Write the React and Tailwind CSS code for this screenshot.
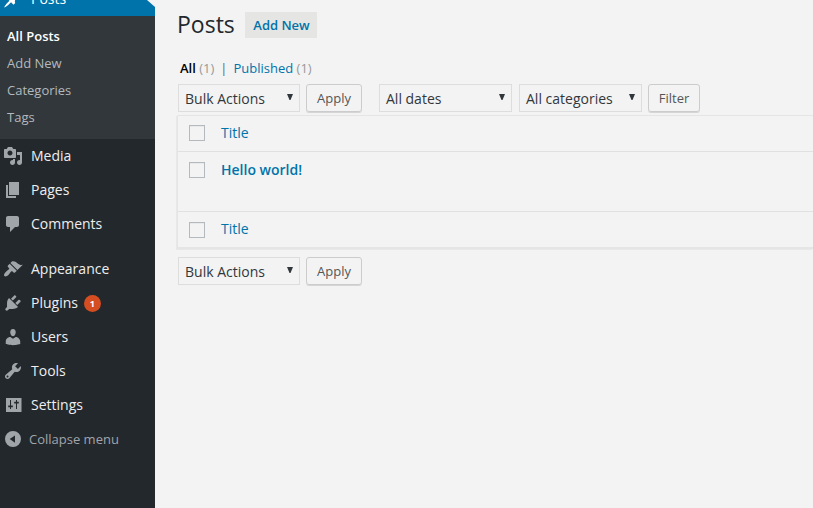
const ICONS = {
  post: "M10.44 3.02l1.82-1.82 6.36 6.35-1.83 1.82c-1.05-.68-2.48-.57-3.41.36l-.75.75c-.92.93-1.04 2.35-.35 3.41l-1.83 1.82-2.41-2.41-2.8 2.79c-.42.42-3.38 2.71-3.8 2.29s1.86-3.39 2.28-3.81l2.79-2.79L4.1 9.36l1.83-1.82c1.05.69 2.48.57 3.4-.36l.75-.75c.93-.92 1.05-2.35.36-3.41z",
  media: "M13 11V4c0-.55-.45-1-1-1h-1.67L9 1H5L3.67 3H2c-.55 0-1 .45-1 1v7c0 .55.45 1 1 1h10c.55 0 1-.45 1-1zM7 4.5c1.38 0 2.5 1.12 2.5 2.5S8.38 9.5 7 9.5 4.5 8.38 4.5 7 5.62 4.5 7 4.5zM14 6h5v10.5c0 1.38-1.12 2.5-2.5 2.5S14 17.88 14 16.5s1.12-2.5 2.5-2.5c.17 0 .34.02.5.05V9h-3V6zm-4 8.05V13h2v3.5c0 1.38-1.12 2.5-2.5 2.5S7 17.88 7 16.5 8.12 14 9.5 14c.17 0 .34.02.5.05z",
  page: "M6 15V2h10v13H6zm-1 1h8v2H3V5h2v11z",
  comments: "M5 2h9c1.1 0 2 .9 2 2v7c0 1.1-.9 2-2 2h-2l-5 5v-5H5c-1.1 0-2-.9-2-2V4c0-1.1.9-2 2-2z",
  appearance: "M14.48 11.06L7.41 3.99l1.5-1.5c.5-.56 2.3-.47 3.51.32 1.21.8 1.43 1.28 2.91 2.1 1.18.64 2.45 1.26 4.45.85zm-.71.71L6.7 4.7 4.93 6.47c-.39.39-.39 1.02 0 1.41l1.06 1.06c.39.39.39 1.03 0 1.42-.6.6-1.43 1.11-2.21 1.69-.35.26-.7.53-1.01.84C1.43 14.23.4 16.08 1.4 17.07c.99 1 2.84-.03 4.18-1.36.31-.31.58-.66.85-1.02.57-.78 1.08-1.61 1.69-2.21.39-.39 1.02-.39 1.41 0l1.06 1.06c.39.39 1.02.39 1.41 0z",
  plugins: "M13.11 4.36L9.87 7.6 8 5.73l3.24-3.24c.35-.34 1.05-.2 1.56.32.52.51.66 1.21.31 1.55zm-8 1.77l.91-1.12 9.01 9.01-1.19.84c-.71.71-2.63 1.16-3.82 1.16H6.14L4.9 17.26c-.59.59-1.54.59-2.12 0-.59-.58-.59-1.53 0-2.12l1.24-1.24v-3.88c0-1.13.4-3.19 1.09-3.89zm7.26 3.97l3.24-3.24c.34-.35 1.04-.21 1.55.31.52.51.66 1.21.31 1.55l-3.24 3.25z",
  users: "M10 9.25c-2.27 0-2.73-3.44-2.73-3.44C7 4.02 7.82 2 9.97 2c2.16 0 2.98 2.02 2.71 3.81 0 0-.41 3.44-2.68 3.44zm0 2.57L12.72 10c2.39 0 4.52 2.33 4.52 4.53v2.49s-3.65 1.13-7.24 1.13c-3.65 0-7.24-1.13-7.24-1.13v-2.49c0-2.25 1.94-4.48 4.47-4.48z",
  tools: "M16.68 9.77c-1.34 1.34-3.3 1.67-4.95.99l-5.41 6.52c-.99.99-2.59.99-3.58 0s-.99-2.59 0-3.57l6.52-5.42c-.68-1.65-.35-3.61.99-4.95 1.28-1.28 3.12-1.62 4.72-1.06l-2.89 2.89 2.82 2.82 2.86-2.87c.53 1.58.18 3.39-1.08 4.65zM3.81 16.21c.4.39 1.04.39 1.43 0 .4-.4.4-1.04 0-1.43-.39-.4-1.03-.4-1.43 0-.39.39-.39 1.03 0 1.43z",
  settings: "M3 3h15.5v14H3zM7 5v5.5H5.2v1.8H7V14h1v-1.7h1.8v-1.8H8V5zM13 5v1.8h-1.8v1.8H13V14h1V8.6h1.8V6.8H14V5z",
  collapse: "M10 2a8 8 0 1 0 0 16 8 8 0 0 0 0-16zM12 6.5v7.2L6.7 10z",
};

function Icon({ name, className = "text-[#a0a5aa]" }) {
  return (
    <svg viewBox="0 0 20 20" className={`size-5 shrink-0 fill-current ${className}`}>
      <path fillRule="evenodd" d={ICONS[name]} />
    </svg>
  );
}

function MenuItem({ icon, label, badge }) {
  return (
    <li className="flex h-[34px] items-center pl-[3px] text-[14px] leading-[18px] text-[#eee]">
      <Icon name={icon} />
      <span className="ml-2">{label}</span>
      {badge && (
        <span className="ml-1.5 mt-px flex size-[17px] items-center justify-center rounded-full bg-[#d54e21] text-[9px] font-bold leading-none text-white">
          {badge}
        </span>
      )}
    </li>
  );
}

function Select({ label, className }) {
  return (
    <div className={`flex h-7 items-center justify-between border border-[#ddd] pl-1.5 pr-1.5 text-[14px] text-[#32373c] ${className}`}>
      <span>{label}</span>
      <svg viewBox="0 0 6 6" className="mb-0.5 size-1.5 fill-[#32373c]">
        <path d="M0 0h6L3.5 6h-1z" />
      </svg>
    </div>
  );
}

function Button({ label, className }) {
  return (
    <button className={`h-7 rounded-[3px] border border-[#ccc] text-center text-[13px] leading-[26px] text-[#555] shadow-[0_1px_0_rgba(0,0,0,0.12)] ${className}`}>
      {label}
    </button>
  );
}

function Checkbox() {
  return <span className="size-4 shrink-0 border border-[#b4b9be] shadow-[inset_0_1px_0_rgba(0,0,0,0.04)]" />;
}

function Sidebar() {
  return (
    <nav className="flex h-full w-[155px] shrink-0 flex-col bg-[#23282d]">
      <div className="relative h-4 shrink-0 overflow-hidden bg-[#0073aa]">
        <div className="-mt-[18px] flex h-[34px] items-center pl-[3px] text-[14px] leading-[18px] text-white">
          <Icon name="post" className="text-white" />
          <span className="ml-2">Posts</span>
        </div>
        <svg viewBox="0 0 8 8" className="absolute right-0 top-0 size-2 fill-[#f3f3f3]">
          <path d="M0 0h8v7z" />
        </svg>
      </div>
      <ul className="flex h-[123px] shrink-0 flex-col bg-[#32373c] pl-[7px] pt-[7px] text-[13px] leading-[27px] text-[#b4b9be]">
        <li className="font-semibold text-white">All Posts</li>
        <li>Add New</li>
        <li>Categories</li>
        <li>Tags</li>
      </ul>
      <ul>
        <MenuItem icon="media" label="Media" />
        <MenuItem icon="page" label="Pages" />
        <MenuItem icon="comments" label="Comments" />
      </ul>
      <ul className="mt-[11px]">
        <MenuItem icon="appearance" label="Appearance" />
        <MenuItem icon="plugins" label="Plugins" badge="1" />
        <MenuItem icon="users" label="Users" />
        <MenuItem icon="tools" label="Tools" />
        <MenuItem icon="settings" label="Settings" />
      </ul>
      <div className="flex h-[34px] items-center pl-[3px] text-[13px] text-[#a0a5aa]">
        <Icon name="collapse" />
        <span className="ml-1.5 pt-0.5">Collapse menu</span>
      </div>
    </nav>
  );
}

export default function App() {
  return (
    <div className="flex h-[508px] w-[813px] overflow-hidden bg-[#f3f3f3] font-['Open_Sans',sans-serif]">
      <Sidebar />
      <main className="flex min-w-0 flex-1 flex-col pl-[22px]">
        <header className="flex h-[50px] shrink-0 items-center">
          <h1 className="mb-0.5 w-[59px] text-[23px] font-normal leading-[29px] text-[#23282d]">Posts</h1>
          <a className="ml-[9px] h-[26px] w-[72px] bg-[#e5e5e3] pl-px text-center text-[13px] font-semibold leading-[26px] text-[#0073aa]">
            Add New
          </a>
        </header>
        <div className="mt-2 flex h-5 gap-1.5 whitespace-pre pl-[3px] text-[13px] leading-5 text-[#999]">
          <span><b className="font-semibold text-black">All</b> (1)</span>
          <span className="text-[#666]">|</span>
          <span><a className="text-[#0073aa]">Published</a> (1)</span>
        </div>
        <div className="mt-1.5 flex pl-px">
          <Select label="Bulk Actions" className="w-[122px]" />
          <Button label="Apply" className="ml-1.5 w-14" />
          <Select label="All dates" className="ml-[17px] w-[133px]" />
          <Select label="All categories" className="ml-[7px] w-[123px]" />
          <Button label="Filter" className="ml-1.5 w-[52px]" />
        </div>
        <section className="mt-[3px] flex h-[134px] shrink-0 flex-col border-b-2 border-l border-t border-[#e5e5e5] text-[14px] text-[#0073aa] shadow-[-1px_1px_0_#e8e8e8]">
          <div className="flex h-9 items-center gap-4 border-b border-[#e1e1e1] pb-px pl-[11px]">
            <Checkbox />
            <span className="pb-0.5">Title</span>
          </div>
          <div className="flex h-[60px] items-start gap-4 border-b border-[#e1e1e1] pl-[11px] pt-2.5">
            <Checkbox />
            <span className="font-semibold leading-4">Hello world!</span>
          </div>
          <div className="flex flex-1 items-center gap-4 pl-[11px]">
            <Checkbox />
            <span className="pb-0.5">Title</span>
          </div>
        </section>
        <div className="mt-2 flex pl-px">
          <Select label="Bulk Actions" className="w-[122px]" />
          <Button label="Apply" className="ml-1.5 w-14" />
        </div>
      </main>
    </div>
  );
}
